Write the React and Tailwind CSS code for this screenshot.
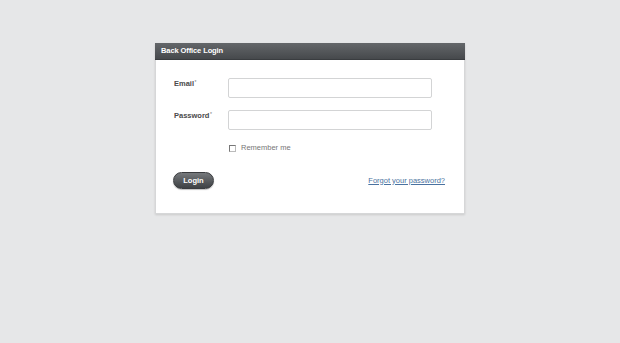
export default function App() {
  const font = { fontFamily: '"Liberation Sans", Arial, sans-serif' };
  return (
    <div className="w-[620px] h-[343px] bg-[#e6e7e8] pt-[43px]" style={font}>
      <div className="mx-auto w-[310px] h-[171px] bg-white border border-[#d6d7d8] border-t-0 shadow-[0_1px_2px_rgba(0,0,0,0.12)] flex flex-col">
        <div className="h-[17px] -mx-px bg-gradient-to-b from-[#64676a] to-[#46494c] border-b border-[#3a3d40] flex items-center px-[6px]">
          <span className="text-[7.5px] font-bold text-white leading-none tracking-[-0.1px]">Back Office Login</span>
        </div>
        <div className="flex flex-col pt-[18px] pl-[18px] pr-[32px]">
          <div className="flex items-start h-[20px]">
            <div className="w-[54px] pt-[1px] text-[7.5px] font-bold text-[#4a4a4a] leading-[10px] flex items-start">
              <span>Email</span>
              <span className="text-[5px] font-normal leading-none ml-[0.5px] mt-[1px] text-[#777]">*</span>
            </div>
            <div className="w-[205px] h-[20px] border border-[#d3d4d5] rounded-[2px] bg-white" />
          </div>
          <div className="flex items-start h-[20px] mt-[12px]">
            <div className="w-[54px] pt-[1px] text-[7.5px] font-bold text-[#4a4a4a] leading-[10px] flex items-start">
              <span>Password</span>
              <span className="text-[5px] font-normal leading-none ml-[0.5px] mt-[1px] text-[#777]">*</span>
            </div>
            <div className="w-[205px] h-[20px] border border-[#d3d4d5] rounded-[2px] bg-white" />
          </div>
          <div className="flex items-center mt-[14px] ml-[55px] h-[8px]">
            <div className="w-[7px] h-[7px] border border-[#777] border-r-[#bbb] border-b-[#bbb] bg-white" />
            <span className="ml-[5px] text-[7.5px] text-[#777] leading-none">Remember me</span>
          </div>
          <div className="flex items-center justify-between mt-[20px] h-[17px]">
            <div className="w-[41px] h-[17px] rounded-full bg-gradient-to-b from-[#76797c] to-[#3e4144] border border-[#3a3c3f] shadow-[0_1px_1px_rgba(0,0,0,0.25)] flex items-center justify-center -ml-[1px]">
              <span className="text-[7.5px] font-bold text-white leading-none">Login</span>
            </div>
            <a href="#" className="text-[7.5px] text-[#4a72a0] underline leading-none mr-[-13px]">Forgot your password?</a>
          </div>
        </div>
      </div>
    </div>
  );
}
